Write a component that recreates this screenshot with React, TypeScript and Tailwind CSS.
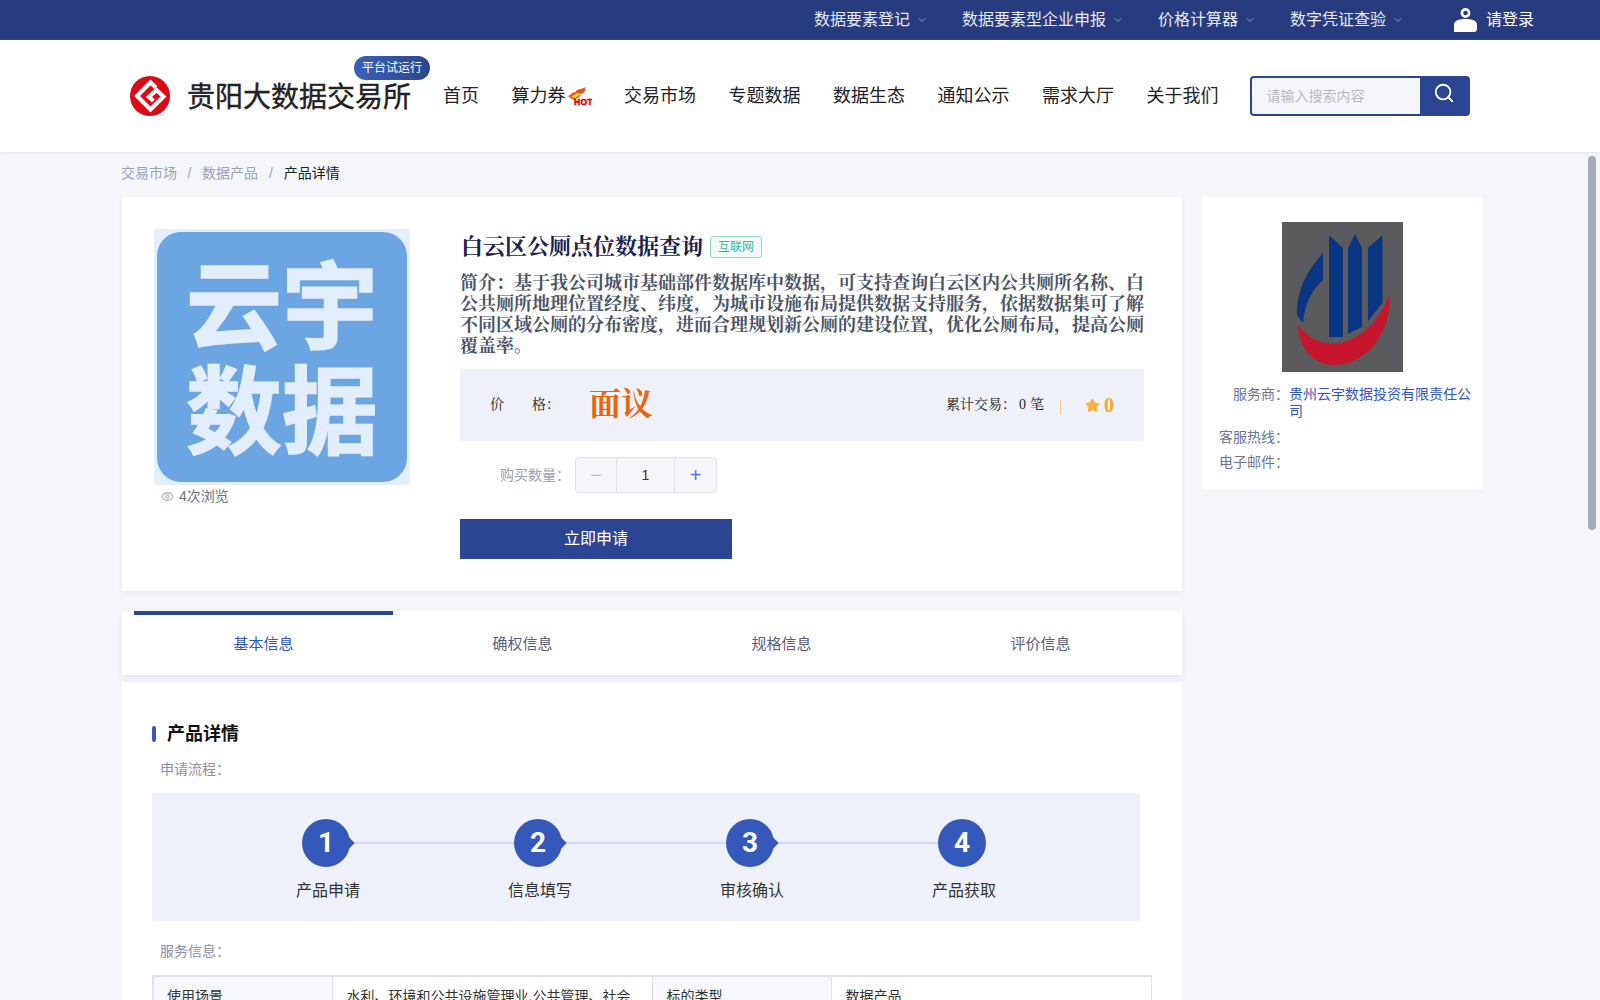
import { ChevronDown, Eye, Search, Star } from "lucide-react";

const sans = "font-['Liberation_Sans','Noto_Sans_CJK_SC',sans-serif]";
const serif = "font-['Liberation_Serif','Noto_Serif_CJK_SC','Noto_Sans_CJK_SC',serif]";

function Logo() {
  return (
    <svg width="40" height="40" viewBox="0 0 40 40" className="shrink-0">
      <circle cx="20" cy="20" r="20" fill="#dc0a14" />
      <path d="M26 11.5 L20.5 6.5 L7 20 L20.5 33.5 L33.5 20.5 L26.5 14 L19 21 L23.5 25" fill="none" stroke="#fff" strokeWidth="4.2" />
    </svg>
  );
}

function Hot() {
  return (
    <svg width="24" height="18" viewBox="0 0 24 18" className="ml-0.5 shrink-0">
      <path d="M0 9 C2 8 4 7 5 5 C6 6 7 6 8 4 C10 2 14 2 18 0 C16 2 17 3 18 3 C16 5 15 5 16 6 C13 6 12 8 11 10 L6 13 C4 12 2 11 0 9 Z" fill="#f5500a" />
      <path d="M3 9 C5 9 7 8 9 6 C10 7 11 6 13 6 C11 8 9 10 7 11 C5 11 4 10 3 9 Z" fill="#fdd835" />
      <text x="6" y="17.5" fontSize="8.5" fontWeight="900" letterSpacing="0.3" fill="#e60000" stroke="#e60000" strokeWidth="0.5" fontFamily="Liberation Sans, sans-serif">HOT</text>
    </svg>
  );
}

function Person() {
  return (
    <svg width="23" height="24" viewBox="0 0 23 24" className="shrink-0">
      <circle cx="11.5" cy="5" r="3.6" fill="none" stroke="#fff" strokeWidth="2.6" />
      <path d="M0 24 V17 C0 13 4 11 11.5 11 C19 11 23 13 23 17 V21 C23 23 22 24 20 24 Z" fill="#fff" />
    </svg>
  );
}

function Provider() {
  return (
    <svg width="121" height="150" viewBox="0 0 121 150" className="shrink-0">
      <rect width="121" height="150" fill="#5b5a5c" />
      <path d="M41 31 V58 C30 68 23 80 21 101 L15 93 C14 70 25 48 41 31 Z" fill="#0a3583" />
      <path d="M47 13 L61 26 V115 H47 Z" fill="#0a3583" />
      <path d="M66 26 L73 12 L80 26 V105 L66 112 Z" fill="#0a3583" />
      <path d="M86 26 L100.5 13 V81 L86 99 Z" fill="#0a3583" />
      <path d="M16 103 C40 136 88 124 107 73 C110 110 85 143 52 143 C30 143 17 125 16 103 Z" fill="#c6152d" />
    </svg>
  );
}

export default function App() {
  const top = ["数据要素登记", "数据要素型企业申报", "价格计算器", "数字凭证查验"];
  const nav = ["首页", "算力券", "交易市场", "专题数据", "数据生态", "通知公示", "需求大厅", "关于我们"];
  const tabs = ["基本信息", "确权信息", "规格信息", "评价信息"];
  const steps = ["产品申请", "信息填写", "审核确认", "产品获取"];
  return (
    <div className={`relative h-[1000px] w-[1600px] overflow-hidden bg-[#f5f6fa] ${sans}`}>
      {/* top bar */}
      <div className="flex h-10 items-center justify-end border-b border-[#24506f] bg-[#273c7f] pr-[66px] text-white">
        {top.map((t) => (
          <div key={t} className="mr-[34px] flex items-center gap-1.5 text-base text-[#e6e9f5]">
            {t}
            <ChevronDown size={12} className="text-[#8a97bf]" />
          </div>
        ))}
        <div className="ml-4 mr-[9px]"><Person /></div>
        <span className="text-base">请登录</span>
      </div>

      {/* header */}
      <div className="flex h-[112px] items-center bg-white pl-[130px] shadow-[0_1px_4px_rgba(0,0,0,0.08)]">
        <Logo />
        <div className="relative ml-[17px] mr-[32px] mt-[3px] text-[28px] text-[#222] [-webkit-text-stroke:0.4px_#222]">
          贵阳大数据交易所
          <span className="absolute -right-[19px] -top-[21px] rounded-full bg-gradient-to-r from-[#3a62b8] to-[#2a4690] px-2 py-1 text-xs leading-4 text-white [-webkit-text-stroke:0]">平台试运行</span>
        </div>
        <div className="flex items-center gap-[32.5px] text-lg text-[#222]">
          {nav.map((n) => (
            <div key={n} className="flex items-center">
              {n}
              {n === "算力券" && <Hot />}
            </div>
          ))}
        </div>
        <div className="ml-[31px] flex h-10 w-[220px] overflow-hidden rounded border-2 border-[#2b4592] bg-[#2b4592]">
          <div className="flex w-[168px] items-center bg-[#f5f6fa] pl-[15px] text-sm text-[#b5b8c8]">请输入搜索内容</div>
          <div className="flex flex-1 items-start justify-center pt-1 text-white"><Search size={22} /></div>
        </div>
      </div>

      {/* breadcrumb */}
      <div className="flex h-[41px] items-center pl-[121px] text-sm text-[#9aa1b8]">
        交易市场<span className="mx-[10.5px]">/</span>数据产品<span className="mx-[11px]">/</span><span className="text-[#222]">产品详情</span>
      </div>

      <div className="mt-1 flex pl-[122px]">
        <div className="flex w-[1060px] flex-col">
          {/* product summary */}
          <div className="flex h-[394px] bg-white pl-8 pt-8 shadow-[0_2px_6px_rgba(0,0,0,0.06)]">
            <div className="w-[256px] shrink-0">
              <div className="flex h-[256px] flex-col items-center justify-center rounded bg-[#e3effc] p-[3px]">
                <div className="flex h-full w-full flex-col items-center justify-center rounded-[24px] bg-[#6ca6e2] pt-1.5 text-[96px] font-bold leading-[105px] text-[#e2eefb] [-webkit-text-stroke:1.5px_#e2eefb]">
                  <div>云宇</div>
                  <div>数据</div>
                </div>
              </div>
              <div className="mt-[3px] flex items-center gap-[5px] pl-[7px] text-sm leading-4 text-[#6b7280]">
                <Eye size={13} strokeWidth={2.5} className="text-[#b4b9cc]" />
                4次浏览
              </div>
            </div>
            <div className={`ml-[50px] w-[684px] ${serif}`}>
              <div className="flex items-center gap-[7px] pt-px">
                <h1 className="ml-px text-[22px] font-bold text-[#1a2352]">白云区公厕点位数据查询</h1>
                <span className={`rounded-[3px] border border-[#8ed8c2] bg-[#f0faf7] px-[7px] text-xs leading-5 text-[#3ab89a] ${sans}`}>互联网</span>
              </div>
              <p className="mt-[10px] text-justify text-lg font-bold leading-[21px] text-[#4a5568]">简介：基于我公司城市基础部件数据库中数据，可支持查询白云区内公共厕所名称、白公共厕所地理位置经度、纬度，为城市设施布局提供数据支持服务，依据数据集可了解不同区域公厕的分布密度，进而合理规划新公厕的建设位置，优化公厕布局，提高公厕覆盖率。</p>
              <div className="mt-[12px] flex h-[72px] items-center bg-[#eef1fa] text-sm text-[#222]">
                <span className="ml-[30px]">价</span><span className="ml-7">格：</span>
                <span className="ml-[29px] text-[32px] font-bold text-[#e8650a]">面议</span>
                <span className="ml-auto">累计交易：</span>
                <span className="ml-[3px]">0</span>
                <span className="ml-1">笔</span>
                <span className="ml-4 mr-6 mt-1 h-3.5 w-px bg-[#f3c678]" />
                <Star size={15} fill="#fbb040" className="text-[#fbb040]" />
                <span className="ml-1 mr-[30px] text-xl font-bold text-[#f5a623]">0</span>
              </div>
              <div className={`mt-4 flex items-center pl-10 ${sans}`}>
                <span className="w-[75px] text-sm text-[#9aa1b8]">购买数量：</span>
                <div className="flex h-9 w-[142px] overflow-hidden rounded border border-[#dfe2ea] bg-[#f5f6fa]">
                  <div className="flex w-[41px] items-center justify-center border-r border-[#dfe2ea] text-xl text-[#b4b8cc]">−</div>
                  <div className="flex flex-1 items-center justify-center border-r border-[#dfe2ea] text-sm text-[#333]">1</div>
                  <div className="flex w-[41px] items-center justify-center text-xl text-[#5b6bf0]">+</div>
                </div>
              </div>
              <div className={`mt-[26px] flex h-10 w-[272px] items-center justify-center bg-[#2b4592] text-base text-white ${sans}`}>立即申请</div>
            </div>
          </div>

          {/* tabs */}
          <div className="mt-5 flex h-16 bg-white px-3 shadow-[0_4px_8px_rgba(0,0,0,0.07)]">
            {tabs.map((t, i) => (
              <div key={t} className={`flex w-[259px] items-center justify-center border-t-4 pb-0.5 text-[15px] ${i === 0 ? "border-[#2b4592] text-[#3356c0]" : "border-transparent text-[#5a6178]"}`}>
                {t}
              </div>
            ))}
          </div>

          {/* details */}
          <div className="mt-[7px] h-[400px] bg-white pl-[30px] pt-[43px]">
            <div className="flex items-center gap-[11px]">
              <span className="h-4 w-1 rounded-sm bg-[#3558bb]" />
              <h2 className="text-lg font-bold leading-[18px] text-[#111]">产品详情</h2>
            </div>
            <div className="mt-[18px] pl-2 text-sm leading-4 text-[#8a90a8]">申请流程：</div>
            <div className="mt-4 flex h-[128px] w-[988px] bg-[#eef1fa] pl-[150px] pt-[26px]">
              {steps.map((s, i) => (
                <div key={s} className={i < 3 ? "w-[212px]" : "w-12"}>
                  <div className="flex items-center">
                    <div className="relative flex size-12 shrink-0 items-center justify-center rounded-full bg-[#3558bb] text-[28px] font-bold text-white font-['Roboto',sans-serif]">
                      {i + 1}
                      {i < 3 && <span className="absolute -right-[3px] top-1/2 size-2 -translate-y-1/2 rotate-45 bg-[#3558bb]" />}
                    </div>
                    {i < 3 && <div className="h-0.5 flex-1 bg-[#d3daf1]" />}
                  </div>
                  <div className="mt-[14px] flex w-12 justify-center whitespace-nowrap pl-1 text-base leading-5 text-[#333]">{s}</div>
                </div>
              ))}
            </div>
            <div className="mt-[22px] pl-2 text-sm leading-4 text-[#8a90a8]">服务信息：</div>
            <table className="mt-4 w-[1000px] table-fixed border-collapse border-l-2 border-t-2 border-[#e0e2e8] text-sm leading-[22px] text-[#333]">
              <tbody>
                <tr>
                  <td className="w-[179px] border border-[#e0e2e8] bg-[#f7f8fb] px-[13px] py-2 align-top">使用场景</td>
                  <td className="w-[320px] border border-[#e0e2e8] px-[14px] py-2 align-top">水利、环境和公共设施管理业,公共管理、社会保障和社会组织</td>
                  <td className="w-[179px] border border-[#e0e2e8] bg-[#f7f8fb] px-[14px] py-2 align-top">标的类型</td>
                  <td className="border border-[#e0e2e8] px-[14px] py-2 align-top">数据产品</td>
                </tr>
              </tbody>
            </table>
          </div>
        </div>

        {/* provider */}
        <div className="ml-5 flex h-[292px] w-[280px] flex-col bg-white pt-[25px]">
          <div className="flex justify-center"><Provider /></div>
          <div className="mt-[14px] flex text-sm leading-[17px]">
            <span className="w-[87px] shrink-0 text-right text-[#6b7596]">服务商：</span>
            <span className="w-[182px] text-[#3356c0]">贵州云宇数据投资有限责任公司</span>
          </div>
          <div className="mt-[9px] flex text-sm leading-[17px] text-[#6b7596]">
            <span className="w-[87px] shrink-0 text-right">客服热线：</span>
          </div>
          <div className="mt-2 flex text-sm leading-[17px] text-[#6b7596]">
            <span className="w-[87px] shrink-0 text-right">电子邮件：</span>
          </div>
        </div>
      </div>

      {/* scrollbar thumb */}
      <div className="absolute right-1 top-[156px] h-[374px] w-2 rounded-full bg-[#a4acb8]" />
    </div>
  );
}
